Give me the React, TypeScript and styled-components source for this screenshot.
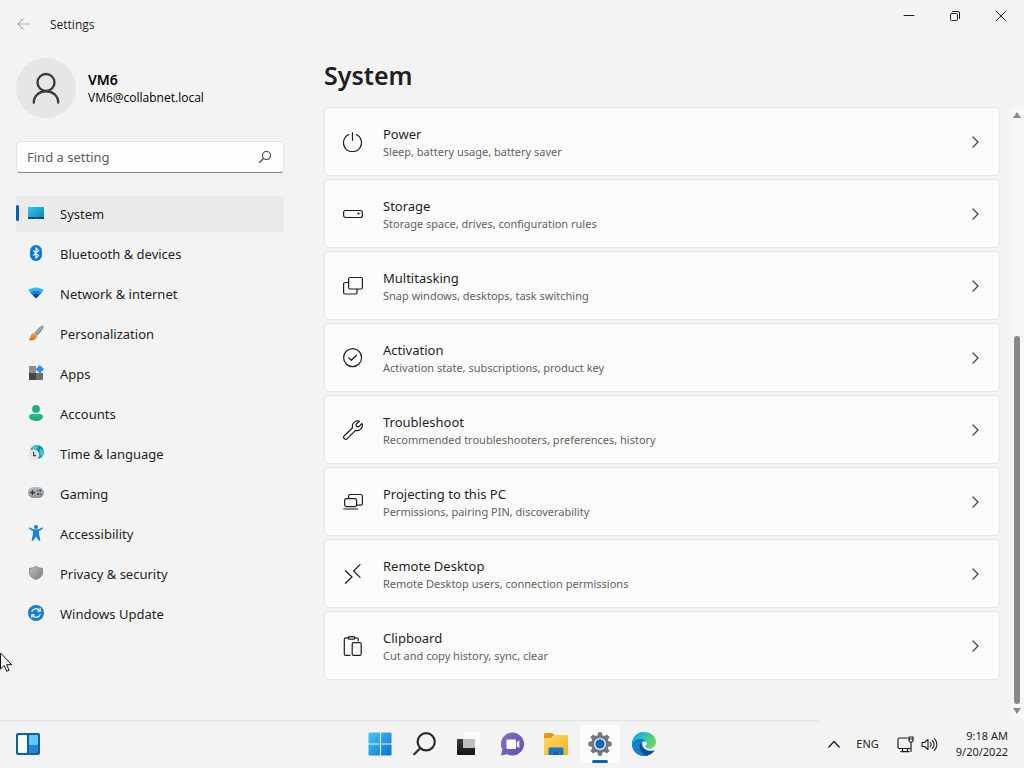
import React from "react";
import styled, { createGlobalStyle } from "styled-components";

const GlobalStyle = createGlobalStyle`
  *, *::before, *::after { box-sizing: border-box; }
  body {
    margin: 0;
    background: #f3f3f3;
    color: #1f1f1f;
    font-family: "Noto Sans", "Open Sans", sans-serif;
    font-size: 13px;
    line-height: 20px;
  }
  button, input { font: inherit; color: inherit; }
  svg { display: block; flex: none; }
`;

const Desktop = styled.div`
  position: relative;
  display: flex;
  flex-direction: column;
  min-height: 100vh;
`;

const TitleBar = styled.header`
  display: flex;
  align-items: center;
  height: 48px;
  padding-left: 16px;
`;

const PlainButton = styled.button`
  display: flex;
  align-items: center;
  justify-content: center;
  border: 0;
  padding: 0;
  background: transparent;
`;

const BackButton = styled(PlainButton)`
  width: 16px;
  height: 32px;
  margin-right: 18px;
`;

const AppName = styled.span`
  flex: 1;
  padding-top: 2px;
  font-family: "Open Sans", sans-serif;
  font-size: 12px;
`;

const WindowButtons = styled.div`
  display: flex;
  align-self: flex-start;
`;

const WindowButton = styled(PlainButton)`
  width: 46px;
  height: 32px;
`;

const Body = styled.div`
  flex: 1;
  display: grid;
  grid-template-columns: 268px minmax(0, 1fr);
  column-gap: 40px;
  padding-left: 16px;
`;

const Sidebar = styled.aside`
  display: flex;
  flex-direction: column;
  gap: 23px;
  padding-top: 10px;
`;

const Profile = styled.div`
  display: flex;
  align-items: center;
  gap: 12px;
`;

const Avatar = styled.div`
  display: flex;
  align-items: center;
  justify-content: center;
  width: 60px;
  height: 60px;
  border-radius: 50%;
  background: #e6e6e6;
`;

const ProfileName = styled.div`
  font-size: 14px;
  font-weight: 600;
  color: #000;
`;

const ProfileMail = styled.div`
  font-family: "Open Sans", sans-serif;
  font-size: 12px;
  line-height: 16px;
  color: #000;
`;

const SearchBox = styled.label`
  display: flex;
  align-items: center;
  height: 32px;
  padding: 0 10px;
  border: 1px solid #e5e5e5;
  border-bottom-color: #868686;
  border-radius: 4px;
  background: #fdfdfd;
`;

const SearchInput = styled.input`
  flex: 1;
  min-width: 0;
  border: 0;
  padding: 0;
  background: transparent;
  outline: none;
  &::placeholder { color: #5f5f5f; opacity: 1; }
`;

const Nav = styled.nav`
  display: flex;
  flex-direction: column;
  gap: 4px;
`;

const NavLink = styled.a<{ $active?: boolean }>`
  position: relative;
  display: flex;
  align-items: center;
  gap: 16px;
  height: 36px;
  padding: 0 12px;
  border-radius: 4px;
  color: inherit;
  text-decoration: none;
  background: ${(p) => (p.$active ? "#eaeaea" : "transparent")};
  svg { margin-bottom: 2px; }
  &::before {
    content: "";
    display: ${(p) => (p.$active ? "block" : "none")};
    position: absolute;
    left: 0;
    top: 9px;
    width: 3px;
    height: 16px;
    border-radius: 2px;
    background: #005fb8;
  }
`;

const Main = styled.main`
  display: flex;
  flex-direction: column;
`;

const PageTitle = styled.h1`
  margin: 0;
  padding: 9px 0 14px;
  font-size: 25px;
  line-height: 36px;
  font-weight: 600;
`;

const ScrollArea = styled.div`
  flex: 1;
  display: flex;
  gap: 10px;
`;

const CardList = styled.div`
  flex: 1;
  min-width: 0;
  display: flex;
  flex-direction: column;
  gap: 3px;
  padding-bottom: 40px;
`;

const Card = styled.button`
  display: flex;
  align-items: center;
  gap: 20px;
  height: 69px;
  padding: 0 18px;
  border: 1px solid #e7e7e7;
  border-radius: 4px;
  background: #fbfbfb;
  text-align: left;
`;

const CardText = styled.span`
  flex: 1;
  display: flex;
  flex-direction: column;
`;

const CardNote = styled.span`
  font-size: 11px;
  line-height: 16px;
  color: #626262;
`;

const ScrollBar = styled.div`
  display: flex;
  flex-direction: column;
  align-items: center;
  width: 14px;
  padding: 4px 0;
  background: linear-gradient(to right, #f3f3f3, #f8f8f8 40%);
`;

const ScrollSpace = styled.div`
  flex: 217;
`;

const ScrollThumb = styled.div`
  flex: 367;
  width: 6px;
  border-radius: 3px;
  background: #8a8a8a;
`;

const TaskBar = styled.footer`
  display: grid;
  grid-template-columns: 1fr auto 1fr;
  align-items: center;
  height: 48px;
  background: linear-gradient(to right, #e2e4e6 80%, transparent 80%) top / 100% 1px no-repeat;
`;

const TaskSide = styled.div`
  padding-left: 8px;
`;

const TaskApps = styled.div`
  display: flex;
  gap: 4px;
`;

const TaskButton = styled(PlainButton)<{ $active?: boolean }>`
  position: relative;
  width: 40px;
  height: 38px;
  border-radius: 4px;
  background: ${(p) => (p.$active ? "#fcfcfc" : "transparent")};
  &::after {
    content: "";
    display: ${(p) => (p.$active ? "block" : "none")};
    position: absolute;
    left: 12px;
    bottom: 0;
    width: 16px;
    height: 3px;
    border-radius: 2px;
    background: #0f62b4;
  }
`;

const Tray = styled.div`
  display: flex;
  align-items: center;
  justify-content: flex-end;
  padding-right: 16px;
  font-size: 11px;
  line-height: 16px;
`;

const TrayButton = styled(PlainButton)<{ $gap: number }>`
  gap: 7px;
  height: 40px;
  margin-right: ${(p) => p.$gap}px;
`;

const Clock = styled.time`
  text-align: right;
`;

const Pointer = styled.svg`
  position: absolute;
  left: 0;
  top: 652px;
`;

type LineProps = { size?: number; children: React.ReactNode; color?: string; width?: number };
const Line = ({ size = 20, children, color = "#1f1f1f", width = 1.2 }: LineProps) => (
  <svg width={size} height={size} viewBox={`0 0 ${size} ${size}`} fill="none" stroke={color}
    strokeWidth={width} strokeLinecap="round" strokeLinejoin="round" aria-hidden="true">
    {children}
  </svg>
);

const Color = ({ size = 16, children }: { size?: number; children: React.ReactNode }) => (
  <svg width={size} height={size} viewBox={`0 0 ${size} ${size}`} aria-hidden="true">{children}</svg>
);

const Fade = ({ id, from, to, diagonal }: { id: string; from: string; to: string; diagonal?: boolean }) => (
  <linearGradient id={id} x1="0" y1="0" x2={diagonal ? "1" : "0"} y2="1">
    <stop offset="0" stopColor={from} />
    <stop offset="1" stopColor={to} />
  </linearGradient>
);

const navItems = [
  {
    label: "System",
    icon: (
      <Color>
        <Fade id="sys" from="#34c8ef" to="#0a82b4" diagonal />
        <rect x="0" y="2" width="16" height="12" rx="1" fill="url(#sys)" />
        <path d="M0 12h16v1a1 1 0 0 1-1 1H1a1 1 0 0 1-1-1z" fill="#0a4365" />
        <path d="M7 13h2M10 13h1" stroke="#35b5df" strokeWidth=".7" />
      </Color>
    ),
  },
  {
    label: "Bluetooth & devices",
    icon: (
      <Color>
        <rect x="2" y="0" width="12" height="16" rx="6" fill="#0a78e3" />
        <path d="M5.2 5.3l5.4 5.2L8 13V3l2.6 2.5-5.4 5.2" fill="none" stroke="#fff" strokeWidth="1.1" />
      </Color>
    ),
  },
  {
    label: "Network & internet",
    icon: (
      <Color>
        <path d="M.2 5.2C4.6 1.5 11.4 1.5 15.8 5.2L8.7 12.8a1 1 0 0 1-1.4 0z" fill="#35bdf1" />
        <path d="M2.3 7.5c3.4-2.7 8-2.7 11.4 0l-5 5.3a1 1 0 0 1-1.4 0z" fill="#1683d4" />
        <path d="M4.6 9.9c2.1-1.5 4.7-1.5 6.8 0l-2.7 2.9a1 1 0 0 1-1.4 0z" fill="#0b4b9c" />
      </Color>
    ),
  },
  {
    label: "Personalization",
    icon: (
      <Color>
        <Fade id="brush" from="#f6a64a" to="#dc6a16" />
        <path d="M14.3.6c1 .1 1.500.8 1.200 1.600-1.300 3.100-3.800 6-6.500 8.200L6.600 8.100C8.600 5.100 11.400 2 14.300.6z" fill="#7d8b93" />
        <path d="M13.800 1.200l1 .9-5.500 6.300-1-.9z" fill="#a9b4ba" />
        <path d="M6.200 8.100l2.800 2.500c-.2 4-4.200 5.500-8.300 4.300 2-1.300 1.200-4.400 3-6 .8-.7 1.700-.9 2.500-.8z" fill="url(#brush)" />
      </Color>
    ),
  },
  {
    label: "Apps",
    icon: (
      <Color>
        <path d="M1 1h7v7H1z" fill="#8c8f92" />
        <path d="M1 8h7v7H2a1 1 0 0 1-1-1z" fill="#434648" />
        <path d="M8 8h7v6a1 1 0 0 1-1 1H8z" fill="#6a6e71" />
        <path d="M11.800.2l4 4-4 4-4-4z" fill="#2b8fe3" stroke="#2b8fe3" strokeLinejoin="round" strokeWidth=".5" />
      </Color>
    ),
  },
  {
    label: "Accounts",
    icon: (
      <Color>
        <Fade id="acc" from="#2bc495" to="#16a07a" />
        <circle cx="8" cy="3.900" r="3.900" fill="#1fae86" />
        <path d="M3.500 9h9a2.500 2.500 0 0 1 2.500 2.300C15 14.300 12.200 16 8 16s-7-1.700-7-4.700A2.500 2.500 0 0 1 3.500 9z" fill="url(#acc)" />
      </Color>
    ),
  },
  {
    label: "Time & language",
    icon: (
      <Color>
        <circle cx="9" cy="7" r="7" fill="#1593b3" />
        <path d="M4 2.200C6 .2 9 0 10.500.3 9.500 2 10 3 8 4.500S5 5 4 2.200zM12 4l3.500 1c.8 2.500 0 5-1.500 6.500L11.500 9z" fill="#43c6cc" />
        <circle cx="5.600" cy="9.900" r="5.600" fill="#e9e4e8" />
        <path d="M5.600 6.700v4h2.600" fill="none" stroke="#39424a" strokeWidth="1.200" />
      </Color>
    ),
  },
  {
    label: "Gaming",
    icon: (
      <Color>
        <Fade id="game" from="#b5bbc0" to="#8e969c" />
        <rect x="0" y="2" width="16" height="11" rx="5.500" fill="url(#game)" />
        <path d="M2.300 7.500h4.400M4.500 5.300v4.400" stroke="#2e3438" strokeWidth="1.300" />
        <circle cx="10.200" cy="9" r="1" fill="#2e3438" />
        <circle cx="12.300" cy="5.500" r="1" fill="#2e3438" />
        <circle cx="12.900" cy="9.200" r=".8" fill="#4c555b" />
        <circle cx="9.700" cy="5.600" r=".8" fill="#4c555b" />
      </Color>
    ),
  },
  {
    label: "Accessibility",
    icon: (
      <Color>
        <circle cx="8" cy="2" r="1.900" fill="#1b6fc0" />
        <path d="M2 2.600c2 1.200 3.600 2 6 2s4-.8 6-2c.8-.2 1.200.8.600 1.300-1.300 1-2.500 1.800-3.600 2.200v3l1.300 5.600c.1 1.200-1.300 1.500-1.800.6L8 11.500l-2.500 3.800c-.5.9-1.900.6-1.800-.6L5 9.100v-3C3.900 5.700 2.700 4.900 1.400 3.900.8 3.400 1.200 2.400 2 2.600z" fill="#1783dd" />
      </Color>
    ),
  },
  {
    label: "Privacy & security",
    icon: (
      <Color>
        <Fade id="shield" from="#b9bcbf" to="#7e8285" diagonal />
        <path d="M8 .8c2 1.500 4 2.100 7 2.200v4.500c0 3.500-2.700 5.900-7 7.500-4.300-1.600-7-4-7-7.500V3c3-.1 5-.7 7-2.200z" fill="#8b8f92" />
        <path d="M8 2.100c1.900 1.200 3.600 1.700 6 1.900v3.500c0 2.900-2.200 4.900-6 6.400-3.800-1.500-6-3.500-6-6.400V4c2.400-.2 4.100-.7 6-1.900z" fill="url(#shield)" />
      </Color>
    ),
  },
  {
    label: "Windows Update",
    icon: (
      <Color>
        <circle cx="8" cy="8" r="8" fill="#127fd4" />
        <path d="M3.700 6.900C4.600 3.500 9.500 2.500 11.700 5.600M12.300 9.100c-.9 3.400-5.800 4.400-8 1.300" fill="none" stroke="#fff" strokeWidth="1.300" />
        <path d="M12.200 3.300v2.800H9.400M3.800 12.700V9.900h2.800" fill="none" stroke="#fff" strokeWidth="1.200" />
      </Color>
    ),
  },
];

const cards = [
  {
    title: "Power",
    note: "Sleep, battery usage, battery saver",
    icon: <Line><path d="M9.500.7v7.600M5.800 2.500a9 9 0 1 0 7.400 0" /></Line>,
  },
  {
    title: "Storage",
    note: "Storage space, drives, configuration rules",
    icon: <Line><rect x=".6" y="6.500" width="18.800" height="7" rx="2" /><circle cx="15.500" cy="9.500" r=".5" /></Line>,
  },
  {
    title: "Multitasking",
    note: "Snap windows, desktops, task switching",
    icon: <Line><rect x="5.600" y="1.500" width="13.800" height="11.500" rx="1.500" /><path d="M5.600 6.500H2.100A1.500 1.500 0 0 0 .6 8v8.500A1.500 1.500 0 0 0 2.100 18h10.400a1.500 1.500 0 0 0 1.500-1.500V13" /></Line>,
  },
  {
    title: "Activation",
    note: "Activation state, subscriptions, product key",
    icon: <Line><circle cx="9.600" cy="9.600" r="9" /><path d="M5.500 9.600l2.800 2.700 5.200-5.100" /></Line>,
  },
  {
    title: "Troubleshoot",
    note: "Recommended troubleshooters, preferences, history",
    icon: <Line><path d="M16.500 1.300a5.300 5.300 0 0 0-6.900 6.500L1.300 15.700a2.100 2.100 0 0 0 3 3l8.200-8.300a5.300 5.300 0 0 0 6.500-6.900l-3.400 3.400-2.100-.5-.5-2.100z" /></Line>,
  },
  {
    title: "Projecting to this PC",
    note: "Permissions, pairing PIN, discoverability",
    icon: <Line><rect x="1.600" y="6.600" width="12" height="8" rx="1.800" /><path d="M5.600 6.500V4.200a1.700 1.700 0 0 1 1.700-1.700h10.400a1.700 1.700 0 0 1 1.700 1.700v7.200a1.700 1.700 0 0 1-1.700 1.700h-4M.7 17h14" /></Line>,
  },
  {
    title: "Remote Desktop",
    note: "Remote Desktop users, connection permissions",
    icon: <Line><path d="M2.500 6.700l6.500 6.300-6.500 6.300M17 .7l-6.300 6.300 6.300 6.300" /></Line>,
  },
  {
    title: "Clipboard",
    note: "Cut and copy history, sync, clear",
    icon: <Line><path d="M6 1.800H2.800a1.500 1.500 0 0 0-1.500 1.500v14.600a1.500 1.500 0 0 0 1.500 1.500H7M11.500 1.800h2.200a1.500 1.500 0 0 1 1.500 1.500v1.500" /><rect x="5.300" y=".6" width="6.400" height="2.600" rx="1.300" /><rect x="9.200" y="6.600" width="9" height="12.800" rx="1.500" /></Line>,
  },
];

const taskApps = [
  {
    label: "Start",
    icon: (
      <Color size={24}>
        <defs><linearGradient id="win" gradientUnits="userSpaceOnUse" x1="0" y1="0" x2="24" y2="24"><stop offset="0" stopColor="#4cc9f5" /><stop offset="1" stopColor="#0a6fd0" /></linearGradient></defs>
        <path d="M1.500.5H12v11H.5v-10a1 1 0 0 1 1-1zM13 .5h9.500a1 1 0 0 1 1 1v10H13zM.5 12.500H12v11H1.500a1 1 0 0 1-1-1zM13 12.500h10.500v10a1 1 0 0 1-1 1H13z" fill="url(#win)" />
      </Color>
    ),
  },
  {
    label: "Search",
    icon: <Line size={24} color="#2a2a2a" width={2.2}><circle cx="14.200" cy="9.800" r="8.600" /><path d="M8.200 16.200L2.200 22.200" /></Line>,
  },
  {
    label: "Task view",
    icon: (
      <Color size={24}>
        <Fade id="front" from="#3a3a3a" to="#151515" />
        <rect x="8" y="0" width="16" height="16" rx="1" fill="#fbfbfb" />
        <rect x="1" y="7" width="18" height="16" rx="1" fill="url(#front)" />
        <path d="M7 7h11a1 1 0 0 1 1 1v8H7z" fill="#bfbfbf" />
      </Color>
    ),
  },
  {
    label: "Chat",
    icon: (
      <Color size={24}>
        <Fade id="chat" from="#8d6fb6" to="#5350c6" diagonal />
        <path d="M12.500.5a11.500 11.500 0 1 1-5.300 21.700L1 23.500l1.300-6A11.500 11.500 0 0 1 12.500.5z" fill="url(#chat)" />
        <rect x="6.500" y="7.500" width="9.500" height="9.500" rx="1" fill="#fff" />
        <path d="M16.800 10.500l2.500-2.300v8l-2.500-2.200z" fill="#fff" />
      </Color>
    ),
  },
  {
    label: "File Explorer",
    icon: (
      <Color size={24}>
        <Fade id="folder" from="#fcd866" to="#f0b323" diagonal />
        <path d="M0 2.500A1.500 1.500 0 0 1 1.500 1H8l2.500 2V7H0z" fill="#dc9b17" />
        <path d="M0 6h7l3-3h12.500A1.500 1.500 0 0 1 24 4.500v17a1.500 1.500 0 0 1-1.500 1.500h-21A1.500 1.500 0 0 1 0 21.500z" fill="url(#folder)" />
        <path d="M4.500 23v-5.500a2 2 0 0 1 2-2h11a2 2 0 0 1 2 2V23h-4v-3h-7v3z" fill="#1278cb" />
        <path d="M8.500 19.500h7V23h-7z" fill="#1a5fa8" />
      </Color>
    ),
  },
  {
    label: "Settings",
    active: true,
    icon: (
      <Color size={24}>
        <g fill="#6f7880">
          <circle cx="12" cy="12" r="9" />
          {[0, 45, 90, 135, 180, 225, 270, 315].map((a) => (
            <path key={a} d="M9.300 4.500L10.100.3h3.800l.8 4.200z" transform={`rotate(${a} 12 12)`} />
          ))}
        </g>
        <circle cx="12" cy="12" r="6" fill="#f3f6f8" />
        <circle cx="12" cy="12" r="4.700" fill="#1168bd" />
      </Color>
    ),
  },
  {
    label: "Microsoft Edge",
    icon: (
      <Color size={24}>
        <defs>
          <linearGradient id="edgeTop" x1="0" y1="0" x2="1" y2=".4"><stop offset="0" stopColor="#1c9fdd" /><stop offset=".5" stopColor="#2bbfc6" /><stop offset="1" stopColor="#6bd65a" /></linearGradient>
        </defs>
        <path d="M0 12C0 5.400 5.400 0 12 0l2 12.500 8.600 5.800C20.600 21.700 16.600 24 12 24 5.400 24 0 18.600 0 12z" fill="#1577c9" />
        <path d="M0 12C.3 5 5.500 0 12 0c7 0 12 4.500 12 10 0 4-3 6.500-6.500 6.500-2.500 0-4-1-4-2 0-.7 1-1.300 1-3 0-2.500-2.500-4.500-6-4.500C4.500 7 1 9 0 12z" fill="url(#edgeTop)" />
        <path d="M8.700 10.500c-1.800 5 .8 11.500 7.300 12.800C9 25.500 1.500 21 .2 14 2 9.500 6 8 8.700 10.500z" fill="#1680cf" />
        <path d="M8.700 10.500c-2.200 3.500-.7 11 6 13.200 3.600-.8 6.500-3 7.900-5.700-4.600 2.400-12.600 1-13.900-7.500z" fill="#0e4d99" />
        <path d="M10.500 9.800c2.400-.8 4 .3 4 1.800 0 1.600-1 2.200-1 2.900 0 1 1.500 2 4 2 2.300 0 4.300-.8 5.500-2.300.8 1.400.7 2.800-.4 4-4.600 1.400-9.600 0-11.600-3.500-.9-1.700-1-3.500-.5-4.900z" fill="#f3f5f7" />
      </Color>
    ),
  },
];

export default function App() {
  return (
    <Desktop>
      <GlobalStyle />
      <TitleBar>
        <BackButton aria-label="Back">
          <Line size={16} color="#b4b4b4"><path d="M2 8h12M7 3L2 8l5 5" /></Line>
        </BackButton>
        <AppName>Settings</AppName>
        <WindowButtons>
          <WindowButton aria-label="Minimize"><Line size={12} width={1}><path d="M1 5.500h10" /></Line></WindowButton>
          <WindowButton aria-label="Restore">
            <Line size={12} width={1}><rect x="1.500" y="3.500" width="7" height="7" rx="1" /><path d="M3.500 1.500H9a1.500 1.500 0 0 1 1.500 1.500v5.500" /></Line>
          </WindowButton>
          <WindowButton aria-label="Close"><Line size={12} width={1}><path d="M1 1l10 10M11 1L1 11" /></Line></WindowButton>
        </WindowButtons>
      </TitleBar>
      <Body>
        <Sidebar>
          <Profile>
            <Avatar>
              <Line size={32} color="#3c3c3c" width={2.4}>
                <circle cx="16" cy="10.500" r="8.500" />
                <path d="M3.800 30.500c0-6.800 5.400-11.300 12.200-11.300s12.200 4.500 12.200 11.300" />
              </Line>
            </Avatar>
            <div>
              <ProfileName>VM6</ProfileName>
              <ProfileMail>VM6@collabnet.local</ProfileMail>
            </div>
          </Profile>
          <SearchBox>
            <SearchInput type="text" placeholder="Find a setting" aria-label="Find a setting" />
            <Line size={16} color="#444" width={1.1}><circle cx="9.500" cy="6.500" r="4" /><path d="M6.500 9.500L2.500 13.500" /></Line>
          </SearchBox>
          <Nav>
            {navItems.map((item, i) => (
              <NavLink key={item.label} href="#" $active={i === 0}>
                {item.icon}
                {item.label}
              </NavLink>
            ))}
          </Nav>
        </Sidebar>
        <Main>
          <PageTitle>System</PageTitle>
          <ScrollArea>
            <CardList>
              {cards.map((card) => (
                <Card key={card.title}>
                  {card.icon}
                  <CardText>
                    <span>{card.title}</span>
                    <CardNote>{card.note}</CardNote>
                  </CardText>
                  <Line size={12} width={1.3} color="#444"><path d="M4 1l5 5-5 5" /></Line>
                </Card>
              ))}
            </CardList>
            <ScrollBar aria-hidden="true">
              <Color size={8}><path d="M4 1l4 6H0z" fill="#8a8a8a" /></Color>
              <ScrollSpace />
              <ScrollThumb />
              <Color size={12}><path d="M2 4h8l-4 6z" fill="#8a8a8a" /></Color>
            </ScrollBar>
          </ScrollArea>
        </Main>
      </Body>
      <TaskBar>
        <TaskSide>
          <TaskButton aria-label="Widgets">
            <Color size={24}>
              <rect x="0" y="1" width="24" height="22" rx="2" fill="#145f9f" />
              <rect x="2" y="3" width="9" height="18" rx="1" fill="#fafcfd" />
              <rect x="13" y="3" width="9" height="10" rx="1" fill="#63c7f5" />
              <rect x="13" y="13" width="9" height="8" rx="1" fill="#2089d8" />
            </Color>
          </TaskButton>
        </TaskSide>
        <TaskApps>
          {taskApps.map((app) => (
            <TaskButton key={app.label} aria-label={app.label} $active={app.active}>{app.icon}</TaskButton>
          ))}
        </TaskApps>
        <Tray>
          <TrayButton $gap={16} aria-label="Show hidden icons"><Line size={12} width={1.3}><path d="M.8 9L6 3.500 11.200 9" /></Line></TrayButton>
          <TrayButton $gap={18}>ENG</TrayButton>
          <TrayButton $gap={18} aria-label="Network and volume">
            <Line size={17}>
              <path d="M10.500 2H2.500A1.500 1.500 0 0 0 1 3.500V11a1.500 1.500 0 0 0 1.500 1.500H13M5.500 12.500V15.500M10.500 12.500V15.500M4 15.600h8" />
              <path d="M12 1h4v3.500a1.500 1.500 0 0 1-1.500 1.500h-1A1.500 1.500 0 0 1 12 4.500zM12 3h4M14 6v9.500" />
            </Line>
            <Line size={17} width={1.1}>
              <path d="M1 6.500v4h2.500L7 13.500v-10L3.500 6.500zM9.200 6.300a3 3 0 0 1 0 4.400M11.300 4.500a5.500 5.500 0 0 1 0 8M13.400 2.700a8 8 0 0 1 0 11.600" />
            </Line>
          </TrayButton>
          <Clock>
            <div>9:18 AM</div>
            <div>9/20/2022</div>
          </Clock>
        </Tray>
      </TaskBar>
      <Pointer width="13" height="21" viewBox="0 0 13 21" aria-hidden="true">
        <path d="M.5 1v16l3.700-3.500 2.500 5.800 2.400-1-2.500-5.600h5.100z" fill="#fff" stroke="#111" strokeWidth="1" />
      </Pointer>
    </Desktop>
  );
}
